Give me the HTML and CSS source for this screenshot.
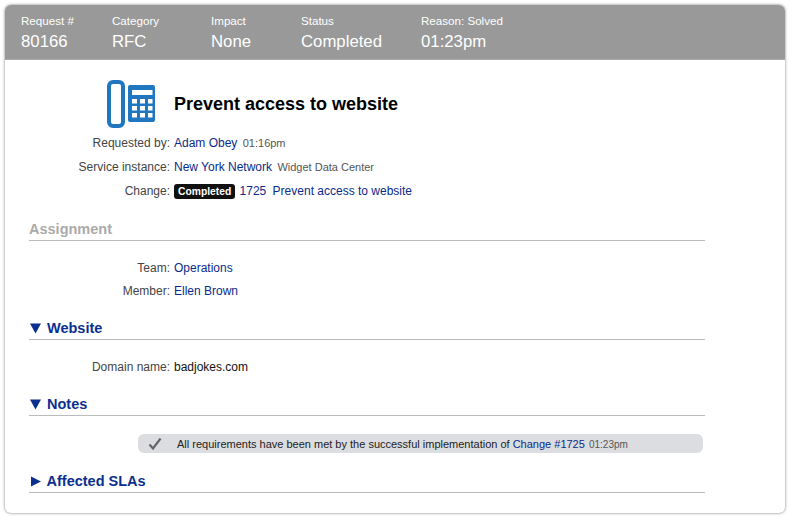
FILE: index.html
```html
<!DOCTYPE html>
<html lang="en">
<head>
<meta charset="utf-8">
<title>Request 80166</title>
<link rel="stylesheet" href="styles.css">
</head>
<body>
<main class="card">
  <header class="summary">
    <div class="stat"><span class="stat-label">Request #</span><span class="stat-value">80166</span></div>
    <div class="stat"><span class="stat-label">Category</span><span class="stat-value">RFC</span></div>
    <div class="stat"><span class="stat-label">Impact</span><span class="stat-value">None</span></div>
    <div class="stat"><span class="stat-label">Status</span><span class="stat-value">Completed</span></div>
    <div class="stat"><span class="stat-label">Reason: Solved</span><span class="stat-value">01:23pm</span></div>
  </header>
  <div class="content">
    <div class="title-row">
      <svg class="phone" width="48" height="48" viewBox="0 0 48 48" aria-hidden="true">
        <rect x="2" y="2" width="14" height="44" rx="4" fill="none" stroke="#2176c0" stroke-width="4"/>
        <path fill="#2176c0" fill-rule="evenodd" d="M23 5h23a2 2 0 0 1 2 2v33a2 2 0 0 1-2 2H23a2 2 0 0 1-2-2V7a2 2 0 0 1 2-2zM25 10v5h20.500v-5zM25 19v4.500h5V19zM33 19v4.500h5V19zM41 19v4.500h4.500V19zM25 26v4.500h5V26zM33 26v4.500h5V26zM41 26v4.500h4.500V26zM25 33v4.500h5V33zM33 33v4.500h5V33zM41 33v4.500h4.500V33z"/>
      </svg>
      <h1 class="title">Prevent access to website</h1>
    </div>
    <dl class="fields">
      <dt>Requested by:</dt>
      <dd><a href="#">Adam Obey</a> <span class="meta">01:16pm</span></dd>
      <dt>Service instance:</dt>
      <dd><a href="#">New York Network</a> <span class="meta">Widget Data Center</span></dd>
      <dt>Change:</dt>
      <dd><span class="badge">Completed</span> <a href="#">1725</a> <a href="#" class="gap">Prevent access to website</a></dd>
    </dl>
    <h2 class="section muted">Assignment</h2>
    <dl class="fields fields-tight">
      <dt>Team:</dt>
      <dd><a href="#">Operations</a></dd>
      <dt>Member:</dt>
      <dd><a href="#">Ellen Brown</a></dd>
    </dl>
    <h2 class="section"><svg class="arrow" width="18" height="11" viewBox="0 0 18 11" aria-hidden="true"><path d="M1 .5h11L6.500 10.500z"/></svg>Website</h2>
    <dl class="fields fields-single">
      <dt>Domain name:</dt>
      <dd>badjokes.com</dd>
    </dl>
    <h2 class="section"><svg class="arrow" width="18" height="11" viewBox="0 0 18 11" aria-hidden="true"><path d="M1 .5h11L6.500 10.500z"/></svg>Notes</h2>
    <div class="note">
      <svg class="check" width="14" height="12" viewBox="0 0 14 12" aria-hidden="true"><path d="M1.500 6.500 5 10.500 12.500.5" fill="none" stroke="#666" stroke-width="2.200"/></svg>
      <span class="note-text">All requirements have been met by the successful implementation of <a href="#">Change #1725</a> <span class="note-time">01:23pm</span></span>
    </div>
    <h2 class="section"><svg class="arrow" width="17.500" height="11" viewBox="0 0 17.500 11" aria-hidden="true"><path d="M2 .5 12 5.500 2 10.500z"/></svg>Affected SLAs</h2>
  </div>
</main>
</body>
</html>
```
FILE: styles.css
```css
* { box-sizing: border-box; }
html, body { margin: 0; background: #fff; }
body {
  width: 790px;
  height: 518px;
  padding: 5px;
  font-family: "Liberation Sans", Arial, sans-serif;
  font-size: 12px;
  color: #111;
  overflow: hidden;
}
a { color: #0b2a8a; text-decoration: none; }
.card {
  height: 508px;
  border-radius: 6px;
  background: #fff;
  box-shadow: 0 0 3px rgba(0,0,0,.55);
  overflow: hidden;
}
.summary {
  display: grid;
  grid-template-columns: 91px 99px 90px 120px 1fr;
  height: 55px;
  padding: 9px 0 0 16px;
  background: #999;
  color: #fff;
  border-bottom: 1px solid #aaa;
}
.stat { display: flex; flex-direction: column; }
.stat-label { font-size: 11.600px; line-height: 14px; }
.stat-value { font-size: 16.750px; line-height: 20px; margin-top: 4px; }
.content { padding: 20px 80px 0 24px; }
.title-row { display: flex; align-items: center; gap: 19px; padding-left: 78px; height: 48px; }
.phone { flex: none; }
.title { margin: 0; font-size: 18px; font-weight: bold; color: #000; }
.fields {
  display: grid;
  grid-template-columns: 141px 1fr;
  column-gap: 4px;
  margin: 0;
  padding-top: 3px;
  line-height: 24px;
}
.fields dt { text-align: right; color: #444; }
.fields dd { margin: 0; }
.fields-tight { padding-top: 16px; line-height: 23px; }
.fields-single { padding-top: 15px; line-height: 24px; }
.meta { font-size: 11px; color: #555; margin-left: 2px; }
.gap { margin-left: 3px; }
.badge {
  display: inline-block;
  padding: 0 4px;
  height: 15px;
  line-height: 15px;
  border-radius: 3px;
  background: #111;
  color: #fff;
  font-size: 10.300px;
  font-weight: bold;
  margin-right: 1px;
}
.section {
  margin: 16px 0 0;
  height: 21px;
  line-height: 19px;
  font-size: 14.500px;
  font-weight: bold;
  color: #0b2f8f;
  border-bottom: 1px solid #bbb;
}
.fields + .section.muted { margin-top: 17px; }
.muted { color: #aaa; }
.arrow { fill: #0b2f8f; vertical-align: -1px; }
.note {
  display: flex;
  align-items: center;
  height: 19px;
  margin: 18px 2px 19px 109px;
  padding-left: 10px;
  border-radius: 6px;
  background: #dcdde1;
  font-size: 11px;
  color: #222;
}
.note + .section { margin-top: 0; }
.check { flex: none; margin-right: 15px; }
.note-text { white-space: nowrap; }
.note-time { font-size: 10px; color: #555; margin-left: 1px; }
```
